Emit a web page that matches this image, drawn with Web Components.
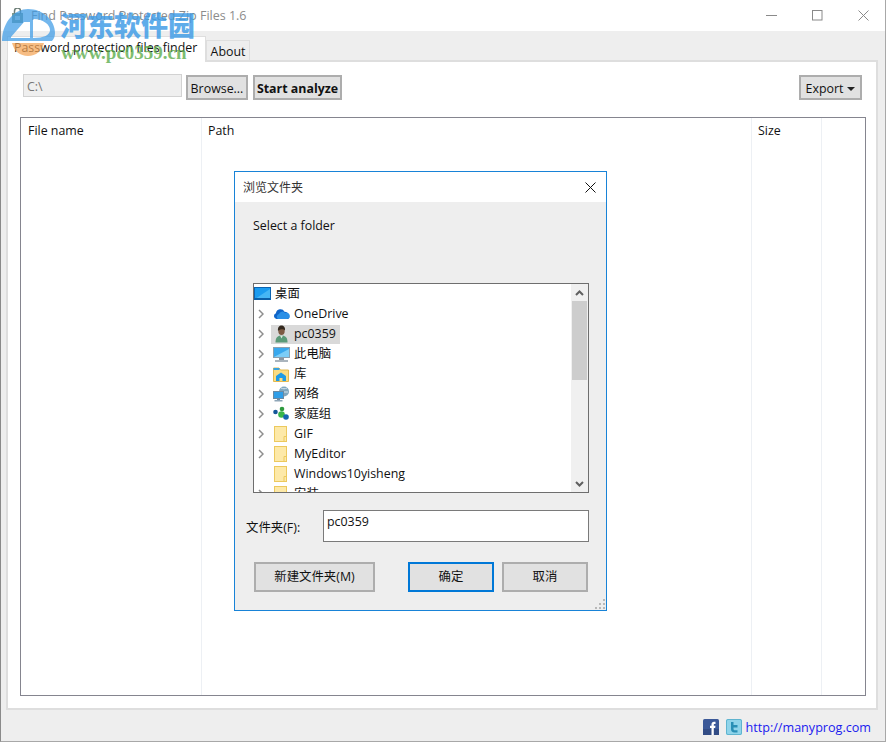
<!DOCTYPE html>
<html>
<head>
<meta charset="utf-8">
<title>Find Password Protected Zip Files 1.6</title>
<style>
	html, body { margin: 0; padding: 0; height: 743px; overflow: hidden; background: #fff; }
	body { font: 12.4px "Open Sans", "Noto Sans CJK SC", sans-serif; color: #000; }
</style>
</head>
<body>
<app-window>
	<title-bar slot="title" text="Find Password Protected Zip Files 1.6"></title-bar>
	<tab-strip slot="tabs"></tab-strip>

	<app-toolbar slot="toolbar"></app-toolbar>
	<file-table slot="table"></file-table>
	<app-footer slot="footer"></app-footer>

	<folder-dialog slot="overlay">
		<tree-row slot="rows" label="桌面" root>
			<svg slot="icon" width="18" height="16" viewBox="0 0 18 16"><rect x="0.500" y="1.500" width="16" height="12" fill="#1a9bef" stroke="#0b63b0"/><path d="M1 13 L16 3 V13Z" fill="#45b6f5"/><rect x="1" y="12" width="15" height="2" fill="#0b5fa8"/></svg>
		</tree-row>
		<tree-row slot="rows" label="OneDrive" arrow>
			<svg slot="icon" width="17" height="12" viewBox="0 0 17 12"><path d="M3.500 11 a3 3 0 0 1-.6-5.800 a4.600 4.600 0 0 1 8.600-1.500 a3.600 3.600 0 0 1 3.600 3.400 a2 2 0 0 1-.4 3.900Z" fill="#0f64c8"/><path d="M5 11 a2.800 2.800 0 0 1 1-5 a3.400 3.400 0 0 1 6-1 a3 3 0 0 1 3 5.600 l-1 .4Z" fill="#2a8fe6"/></svg>
		</tree-row>
		<tree-row slot="rows" label="pc0359" arrow selected>
			<svg slot="icon" width="13" height="18" viewBox="0 0 13 18"><path d="M0.500 17.500 c0-5 2-7 6-7 s6 2 6 7Z" fill="#5a9a78"/><path d="M5 10.500 l1.500 3 1.500-3Z" fill="#dfe9e2"/><ellipse cx="6.500" cy="6" rx="3.200" ry="4" fill="#7d5a44"/><path d="M3 6 c-.5-4 1.500-5.500 3.500-5.500 s4 1.500 3.500 5 c-1-1.800-5-2-7 .5Z" fill="#33291f"/></svg>
		</tree-row>
		<tree-row slot="rows" label="此电脑" arrow>
			<svg slot="icon" width="17" height="17" viewBox="0 0 17 17"><rect x="0.500" y="1.500" width="16" height="10" fill="#38a8ee" stroke="#8aa0b0"/><path d="M1 11 L16 3 V11Z" fill="#7ccdf7"/><rect x="6" y="12" width="5" height="2" fill="#8a97a3"/><rect x="2" y="14" width="13" height="2" fill="#aab4bd"/></svg>
		</tree-row>
		<tree-row slot="rows" label="库" arrow>
			<svg slot="icon" width="16" height="16" viewBox="0 0 16 16"><path d="M0.500 2 H6 L7.500 4 H15.500 V15.500 H0.500Z" fill="#fbdc82" stroke="#e3b94f"/><rect x="0.500" y="2" width="6" height="2" fill="#3aa2e0"/><path d="M8 6.500 L13 10 V15 H9.500 V12 H6.500 V15 H3 V10Z" fill="#1f9be6"/></svg>
		</tree-row>
		<tree-row slot="rows" label="网络" arrow>
			<svg slot="icon" width="17" height="16" viewBox="0 0 17 16"><circle cx="11" cy="5.500" r="5" fill="#7fa6bd"/><path d="M8 2 c2 1 4 1 6 0 M7 6 h8" stroke="#d5e4ee" fill="none"/><rect x="0.500" y="5.500" width="10" height="7" fill="#2f9ee8" stroke="#6a8aa3"/><rect x="4" y="13" width="3" height="1" fill="#6a8aa3"/><rect x="1.500" y="14" width="8" height="1.500" fill="#8fa6b8"/></svg>
		</tree-row>
		<tree-row slot="rows" label="家庭组" arrow>
			<svg slot="icon" width="16" height="16" viewBox="0 0 16 16"><circle cx="2.500" cy="6" r="2.300" fill="#14569a"/><circle cx="9" cy="3" r="2.300" fill="#2e9a3f"/><circle cx="8.500" cy="8.500" r="3.300" fill="#39b54a"/><circle cx="13" cy="11" r="2.800" fill="#1565b0"/></svg>
		</tree-row>
		<tree-row slot="rows" label="GIF" arrow><folder-icon slot="icon"></folder-icon></tree-row>
		<tree-row slot="rows" label="MyEditor" arrow><folder-icon slot="icon"></folder-icon></tree-row>
		<tree-row slot="rows" label="Windows10yisheng"><folder-icon slot="icon"></folder-icon></tree-row>
		<tree-row slot="rows" label="安装" arrow><folder-icon slot="icon"></folder-icon></tree-row>
	</folder-dialog>

	<site-mark slot="overlay"></site-mark>
</app-window>

<script>
(function() {
	const FONT = '"Open Sans", "Noto Sans CJK SC", sans-serif';

	function define(name, html, extra) {
		let tmpl = document.createElement('template');
		tmpl.innerHTML = html;
		class El extends HTMLElement {
			constructor() {
				super();
				this.attachShadow({ mode: 'open' }).appendChild(tmpl.content.cloneNode(true));
			}
			connectedCallback() {
				if (extra) extra.call(this, this.shadowRoot);
			}
		}
		customElements.define(name, El);
	}

	define('app-window', `
		<style>
			:host {
				display: block;
				position: relative;
				box-sizing: border-box;
				width: 886px;
				height: 742px;
				background: #eee;
				border-left: 1px solid #8a8a8a;
				border-right: 1px solid #a8a8a8;
				border-bottom: 1px solid #a8a8a8;
				font: 12.4px ${FONT};
				overflow: hidden;
			}
			.panel {
				box-sizing: border-box;
				margin-left: 5px;
				width: 872px;
				height: 650px;
				background: #fff;
				border: 2px solid #dedede;
				padding: 13px 12px 12px 12px;
				display: flex;
				flex-direction: column;
				gap: 17px;
			}
		</style>
		<slot name="title"></slot>
		<slot name="tabs"></slot>
		<div class="panel">
			<slot name="toolbar"></slot>
			<slot name="table"></slot>
		</div>
		<slot name="footer"></slot>
		<slot name="overlay"></slot>
	`);

	define('title-bar', `
		<style>
			:host {
				display: flex;
				align-items: center;
				height: 31px;
				background: #fff;
				padding-left: 9px;
				color: #8c8c8c;
			}
			svg { flex: none; margin-right: 6px; }
			.text { flex: 1; white-space: nowrap; font-size: 12.5px; }
			.caps { display: flex; width: 137px; height: 31px; flex: none; }
			.caps div { width: 46px; flex: none; display: flex; align-items: center; justify-content: center; }
			.caps svg { margin: 0; }
		</style>
		<svg width="15" height="16" viewBox="0 0 15 16"><rect x="2" y="5" width="11" height="10" fill="#7f9a8c"/><path d="M4.500 6 V3 a3 3 0 0 1 6 0 V6" fill="none" stroke="#6e7f78" stroke-width="1.500"/><rect x="5" y="8" width="5" height="4" fill="#cdd8cf"/></svg>
		<span class="text" id="t"></span>
		<div class="caps">
			<div><svg width="11" height="1"><rect width="11" height="1" fill="#8a8a8a"/></svg></div>
			<div><svg width="11" height="11"><rect x="0.500" y="0.500" width="9.500" height="9.500" fill="none" stroke="#8a8a8a"/></svg></div>
			<div><svg width="11" height="11"><path d="M0.500 0.500 L10.500 10.500 M10.500 0.500 L0.500 10.500" stroke="#8a8a8a" fill="none"/></svg></div>
		</div>
	`, function(root) {
		root.getElementById('t').textContent = this.getAttribute('text');
	});

	define('tab-strip', `
		<style>
			:host {
				display: flex;
				align-items: flex-end;
				box-sizing: border-box;
				height: 31px;
				padding-left: 6px;
				margin-bottom: -2px;
				position: relative;
				z-index: 1;
			}
			.tab {
				box-sizing: border-box;
				border: 1px solid #dedede;
				border-bottom: none;
				display: flex;
				align-items: center;
				white-space: nowrap;
				color: #111;
			}
			.active {
				width: 199px;
				height: 26px;
				padding: 0 0 5px 6px;
				background: #fff;
			}
			.other { width: 44px; height: 20px; background: #eee; justify-content: center; margin-bottom: 2px; padding-top: 1px; }
		</style>
		<div class="tab active">Password protection files finder</div>
		<div class="tab other">About</div>
	`);

	define('app-button', `
		<style>
			:host {
				display: inline-flex;
				align-items: center;
				justify-content: center;
				box-sizing: border-box;
				height: 25px;
				background: #e1e1e1;
				border: 2px solid #adadad;
				white-space: nowrap;
				color: #111;
				gap: 4px;
			}
			:host([bold]) { font-weight: 700; }
			:host([primary]) { border: 2px solid #0078d7; }
		</style>
		<slot></slot>
	`);

	define('app-toolbar', `
		<style>
			:host { display: flex; align-items: flex-start; height: 25px; padding-left: 3px; }
			.path {
				box-sizing: border-box;
				width: 159px;
				height: 23px;
				margin-right: 4px;
				margin-top: -1px;
				padding-left: 3px;
				background: #efefef;
				border: 1px solid #d2d2d2;
				color: #777;
				line-height: 23px;
			}
			app-button { padding-top: 2px; }
			.browse { width: 62px; margin-right: 5px; }
			.start { width: 89px; }
			.export { width: 63px; margin-left: auto; margin-right: 2px; }
			.caret { width: 0; height: 0; border: 4px solid transparent; border-top: 4px solid #222; border-bottom: none; }
		</style>
		<div class="path">C:\\</div>
		<app-button class="browse">Browse...</app-button>
		<app-button class="start" bold>Start analyze</app-button>
		<app-button class="export">Export <span class="caret"></span></app-button>
	`);

	define('file-table', `
		<style>
			:host {
				display: block;
				box-sizing: border-box;
				width: 846px;
				height: 579px;
				border: 1px solid #85858f;
				background: #fff;
			}
			.cols {
				display: grid;
				grid-template-columns: 181px 550px 70px 1fr;
				height: 100%;
			}
			.cols div {
				border-right: 1px solid #edf0f4;
				padding: 4px 0 0 7px;
				color: #111;
			}
			.cols div:last-child { border-right: none; }
			.path { padding-left: 6px !important; }
			.size { padding-left: 6px !important; }
		</style>
		<div class="cols">
			<div>File name</div>
			<div class="path">Path</div>
			<div class="size">Size</div>
			<div></div>
		</div>
	`);

	define('app-footer', `
		<style>
			:host {
				display: flex;
				align-items: center;
				justify-content: flex-end;
				gap: 7px;
				height: 32px;
				padding-right: 14px;
			}
			svg { display: block; }
			.icons { display: flex; gap: 7px; margin-top: 2px; }
			.link { color: #1a1aee; margin-left: -3px; margin-top: 2px; font-size: 12.6px; }
		</style>
		<div class="icons">
			<svg width="16" height="16" viewBox="0 0 16 16"><rect width="16" height="16" rx="1.500" fill="#3b5998"/><rect y="10" width="16" height="6" fill="#324c85"/><path d="M8.500 16 V9 H7 V6.700 H8.500 V5.300 C8.500 3.500 9.500 2.700 11 2.700 H12.500 V5 H11.500 C10.900 5 10.800 5.300 10.800 5.800 V6.700 H12.500 L12.200 9 H10.800 V16Z" fill="#fff"/></svg>
			<svg width="16" height="16" viewBox="0 0 16 16"><rect width="16" height="16" rx="1.500" fill="#8fd4ea"/><rect x="0.500" y="0.500" width="15" height="15" rx="1.500" fill="none" stroke="#5fb4cf"/><path d="M5 3 H7.500 V6 H11.500 V8.500 H7.500 V10 C7.500 11 8.200 11.300 9 11.300 H11.500 V13.500 H8.500 C6 13.500 5 12 5 10Z" fill="#2a8fb5"/></svg>
		</div>
		<span class="link">http://manyprog.com</span>
	`);

	define('folder-icon', `
		<style>
			:host { display: block; width: 14px; height: 16px; }
			svg { display: block; }
		</style>
		<svg width="14" height="16" viewBox="0 0 14 16"><rect x="0.500" y="0.500" width="12" height="15" fill="#fde9a8" stroke="#ecc95e"/><path d="M10 15.500 V10.500 H12.500" fill="none" stroke="#ecc95e"/></svg>
	`);

	define('tree-row', `
		<style>
			:host { display: flex; align-items: center; height: 20px; white-space: nowrap; color: #111; }
			.chev { width: 17px; flex: none; display: flex; justify-content: center; padding-right: 3px; box-sizing: border-box; }
			.icon { width: 20px; margin-right: 3px; flex: none; display: flex; justify-content: center; align-items: center; }
			.sel { display: flex; align-items: center; height: 19px; }
			.text { padding: 0 4px 2px 0; line-height: 17px; }
			:host([selected]) .sel { background: #d9d9d9; }
			:host([root]) .chev { display: none; }
			:host([root]) .icon { width: 21px; margin-right: 0; justify-content: flex-start; }
			svg { display: block; }
		</style>
		<span class="chev"><svg id="c" width="6" height="10" viewBox="0 0 6 10"><path d="M1 1 L5 5 L1 9" fill="none" stroke="#8e8e8e" stroke-width="1.500"/></svg></span>
		<span class="sel"><span class="icon"><slot name="icon"></slot></span><span class="text" id="t"></span></span>
	`, function(root) {
		root.getElementById('t').textContent = this.getAttribute('label');
		if (!this.hasAttribute('arrow')) root.getElementById('c').style.visibility = 'hidden';
	});

	define('folder-dialog', `
		<style>
			:host {
				position: absolute;
				left: 233px;
				top: 171px;
				width: 373px;
				height: 440px;
				box-sizing: border-box;
				border: 1px solid #1883d7;
				background: #eee;
				display: flex;
				flex-direction: column;
				font: 12.4px ${FONT};
				color: #111;
			}
			.head {
				display: flex;
				justify-content: space-between;
				align-items: center;
				height: 30px;
				padding: 0 10px 0 8px;
				background: #fff;
				flex: none;
				font-size: 12px;
				color: #333;
			}
			.msg { margin: 15px 0 0 18px; height: 66px; flex: none; }
			.tree {
				box-sizing: border-box;
				margin-left: 18px;
				width: 336px;
				height: 210px;
				border: 1px solid #6e6e6e;
				background: #fff;
				display: flex;
				overflow: hidden;
				flex: none;
			}
			.rows { flex: 1; overflow: hidden; }
			.bar {
				width: 17px;
				background: #f0f0f0;
				display: flex;
				flex-direction: column;
				align-items: center;
				flex: none;
			}
			.arrow { height: 17px; display: flex; align-items: center; justify-content: center; }
			.thumb { width: 15px; height: 79px; background: #cdcdcd; flex: none; }
			.fill { flex: 1; }
			.field { display: flex; align-items: center; margin: 17px 0 0 11px; height: 32px; flex: none; }
			.label { width: 77px; padding-top: 2px; }
			.box {
				box-sizing: border-box;
				width: 266px;
				height: 32px;
				border: 1px solid #7a7a7a;
				background: #fff;
				padding: 1px 3px 0;
				line-height: 20px;
			}
			.btns { display: flex; margin: 20px 0 0 19px; height: 30px; }
			.btns app-button { height: 30px; padding-bottom: 2px; }
			.btn-new { width: 121px; margin-right: 33px; }
			.btn-ok { width: 86px; margin-right: 8px; }
			.btn-cancel { width: 86px; }
			.grip { position: absolute; right: 1px; bottom: 1px; }
		</style>
		<div class="head">
			<span>浏览文件夹</span>
			<svg width="11" height="11"><path d="M0.500 0.500 L10.500 10.500 M10.500 0.500 L0.500 10.500" stroke="#111" fill="none"/></svg>
		</div>
		<div class="msg">Select a folder</div>
		<div class="tree">
			<div class="rows"><slot name="rows"></slot></div>
			<div class="bar">
				<div class="arrow"><svg width="9" height="6"><path d="M1 5 L4.500 1.500 L8 5" fill="none" stroke="#606060" stroke-width="2"/></svg></div>
				<div class="thumb"></div>
				<div class="fill"></div>
				<div class="arrow"><svg width="9" height="6"><path d="M1 1 L4.500 4.500 L8 1" fill="none" stroke="#606060" stroke-width="2"/></svg></div>
			</div>
		</div>
		<div class="field">
			<span class="label">文件夹(F):</span>
			<div class="box">pc0359</div>
		</div>
		<div class="btns">
			<app-button class="btn-new">新建文件夹(M)</app-button>
			<app-button class="btn-ok" primary>确定</app-button>
			<app-button class="btn-cancel">取消</app-button>
		</div>
		<svg class="grip" width="10" height="10" viewBox="0 0 10 10" fill="#b8b8b8"><rect x="8" y="0" width="2" height="2"/><rect x="4" y="4" width="2" height="2"/><rect x="8" y="4" width="2" height="2"/><rect x="0" y="8" width="2" height="2"/><rect x="4" y="8" width="2" height="2"/><rect x="8" y="8" width="2" height="2"/></svg>
	`);

	// watermark sits over the title bar and the first tab
	define('site-mark', `
		<style>
			:host {
				position: absolute;
				left: -1px;
				top: 8px;
				width: 200px;
				height: 56px;
				z-index: 2;
				pointer-events: none;
			}
			svg { position: absolute; left: 0; top: -4px; }
			.cn {
				position: absolute;
				left: 60px;
				top: 0;
				font: 900 27px/34px "Noto Sans CJK SC", sans-serif;
				color: #3d9be6;
				white-space: nowrap;
				opacity: .82;
			}
			.url {
				position: absolute;
				left: 61px;
				top: 33px;
				font: 700 19px/24px "Liberation Serif", serif;
				color: #5fae4e;
				white-space: nowrap;
				opacity: .8;
			}
		</style>
		<svg width="58" height="56" viewBox="0 0 58 56">
			<path fill-rule="evenodd" d="M2 36 C3 17 15 5 28 5 C43 5 55 16 55 29 C55 32 54 35 52 37 L2 37Z M33 15 C44 15 50 21 50 26 C50 31 44 34 33 34Z M11 33 L24 18 H30 V34 H11Z" fill="#3d9be6" opacity=".72"/>
			<path d="M12 39 H44 C42 47 36 52 28 52 C20 52 14 47 12 39Z" fill="#f4a454" opacity=".72"/>
		</svg>
		<span class="cn">河东软件园</span>
		<span class="url">www.pc0359.cn</span>
	`);
})();
</script>
</body>
</html>
